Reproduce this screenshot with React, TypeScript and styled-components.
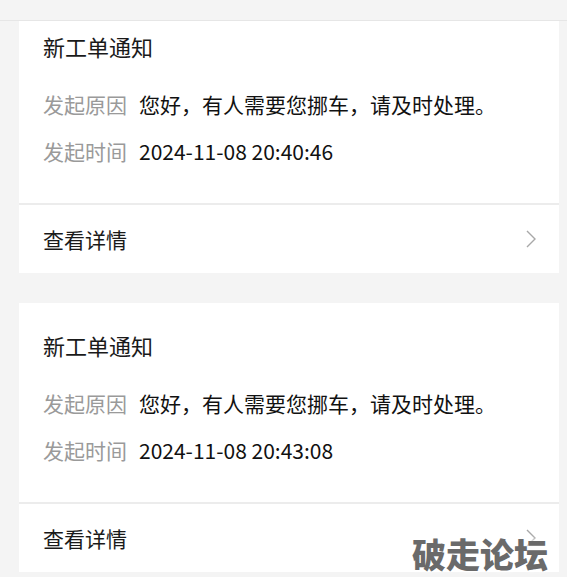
import styled, { createGlobalStyle } from "styled-components";

const GlobalStyle = createGlobalStyle`
  html, body {
    margin: 0;
    padding: 0;
    background: #f4f4f4;
    font-family: "Noto Sans CJK SC", "Noto Sans", sans-serif;
  }
`;

const notices = [
  { id: "a", reason: "您好，有人需要您挪车，请及时处理。", time: "2024-11-08 20:40:46" },
  { id: "b", reason: "您好，有人需要您挪车，请及时处理。", time: "2024-11-08 20:43:08" },
];

const Page = styled.div`
  width: 567px;
  height: 577px;
  overflow: hidden;
  position: relative;
  background: #f4f4f4;
`;

const TopBar = styled.div`
  position: absolute;
  top: 0;
  left: 0;
  right: 0;
  height: 20px;
  background: #f4f4f4;
  border-bottom: 1px solid #e6e6e6;
  z-index: 2;
`;

const List = styled.div`
  display: flex;
  flex-direction: column;
  gap: 30px;
  padding: 4px 8px 0 19px;
`;

const Card = styled.div`
  background: #ffffff;
  display: flex;
  flex-direction: column;
`;

const Body = styled.div`
  padding: 28px 24px 38px;
  display: flex;
  flex-direction: column;
`;

const Title = styled.div`
  font-size: 22px;
  line-height: 28px;
  color: #1a1a1a;
`;

const Row = styled.div<{ gap: number }>`
  display: flex;
  align-items: center;
  gap: 12px;
  margin-top: ${({ gap }) => gap}px;
  font-size: 21px;
  line-height: 28px;
`;

const Label = styled.span`
  color: #9a9a9a;
`;

const Value = styled.span`
  color: #111111;
`;

const Footer = styled.div`
  border-top: 2px solid #ececec;
  height: 68px;
  padding: 0 23px 0 24px;
  display: flex;
  align-items: center;
  justify-content: space-between;
  font-size: 21px;
  color: #1a1a1a;
`;

const Chevron = styled.svg`
  width: 10px;
  height: 18px;
  display: block;
`;

const Watermark = styled.div`
  position: absolute;
  right: 19px;
  bottom: 6px;
  font-size: 34px;
  line-height: 34px;
  font-weight: 900;
  color: #6a6a6a;
  text-shadow: 0 0 6px #ffffff, 0 0 3px #ffffff;
  z-index: 3;
`;

export default function App() {
  return (
    <Page>
      <GlobalStyle />
      <TopBar />
      <List>
        {notices.map((n) => (
          <Card key={n.id}>
            <Body>
              <Title>新工单通知</Title>
              <Row gap={30}>
                <Label>发起原因</Label>
                <Value>{n.reason}</Value>
              </Row>
              <Row gap={19}>
                <Label>发起时间</Label>
                <Value>{n.time}</Value>
              </Row>
            </Body>
            <Footer>
              <span>查看详情</span>
              <Chevron viewBox="0 0 10 18">
                <polyline points="1,1 9,9 1,17" fill="none" stroke="#a8a8a8" strokeWidth="1.4" />
              </Chevron>
            </Footer>
          </Card>
        ))}
      </List>
      <Watermark>破走论坛</Watermark>
    </Page>
  );
}
